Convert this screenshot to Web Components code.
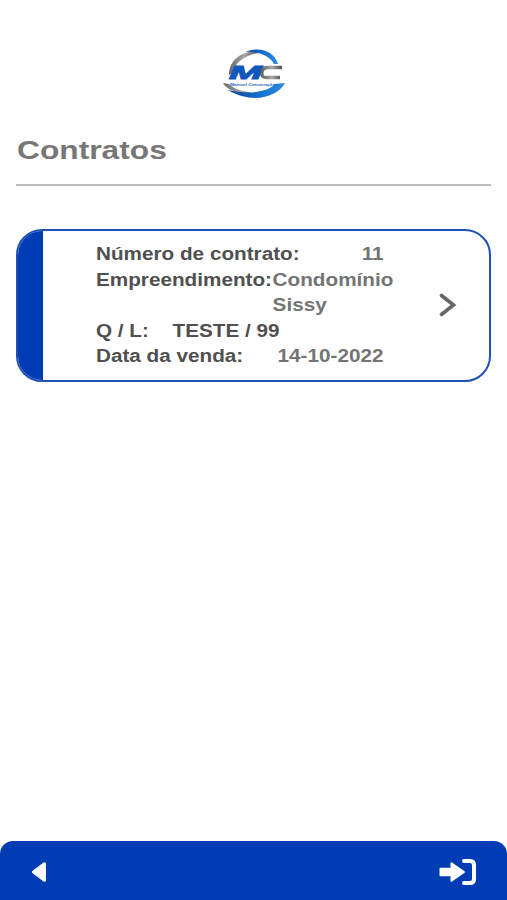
<!DOCTYPE html>
<html lang="pt-BR">
<head>
<meta charset="utf-8">
<title>Contratos</title>
<style>
    html, body { margin: 0; height: 100%; }
    body { background: #fff; font-family: "Liberation Sans", Arial, sans-serif; }
</style>
</head>
<body>
<app-screen>
    <brand-logo slot="logo"></brand-logo>
    <page-title slot="title">Contratos</page-title>
    <contract-card numero="11" empreendimento="Condomínio Sissy" lote="TESTE / 99" data="14-10-2022"></contract-card>
    <bottom-bar slot="footer"></bottom-bar>
</app-screen>

<script>
class AppScreen extends HTMLElement {
    constructor() {
        super();
        this.attachShadow({ mode: 'open' });
        this.shadowRoot.innerHTML = `
            <style>
                :host { display: flex; flex-direction: column; height: 100vh; overflow: hidden; }
                header { display: flex; justify-content: center; padding-top: 46px; height: 54px; }
                main { flex: 1; padding: 43px 16px 0; }
            </style>
            <header><slot name="logo"></slot></header>
            <slot name="title"></slot>
            <main><slot></slot></main>
            <slot name="footer"></slot>
        `;
    }
}

class BrandLogo extends HTMLElement {
    constructor() {
        super();
        this.attachShadow({ mode: 'open' });
        this.shadowRoot.innerHTML = `
            <style>
                :host { display: block; width: 68px; height: 54px; }
                svg { display: block; }
                text { font-family: "Liberation Sans", Arial, sans-serif; font-weight: bold; }
            </style>
            <svg width="68" height="54" viewBox="0 0 68 54">
                <defs>
                    <linearGradient id="blue" x1="0" x2="1">
                        <stop offset="0" stop-color="#0b3f9c"/>
                        <stop offset=".55" stop-color="#1471cf"/>
                        <stop offset="1" stop-color="#2b8be0"/>
                    </linearGradient>
                    <linearGradient id="gray" x1="0" x2="1">
                        <stop offset="0" stop-color="#666"/>
                        <stop offset=".5" stop-color="#a8a8a8"/>
                        <stop offset="1" stop-color="#4c4c4c"/>
                    </linearGradient>
                </defs>
                <path fill="url(#gray)" d="M9 29 C9 15 20 6 35 5 L40 7 C27 8 15 16 12 27Z"/>
                <path fill="url(#blue)" d="M25 6 C40 0 54 5 58 18 L54 18 C50 10 39 5 25 6Z"/>
                <path fill="url(#gray)" d="M3 37 C8 46 23 49 40 48 C25 46 13 43 9 38Z"/>
                <path fill="url(#blue)" d="M8 44 C28 49 48 46 55 38 L65 37 C57 52 31 58 8 44Z"/>
                <text x="9" y="32.5" font-size="19" font-style="italic" fill="#1257bd" stroke="#1257bd" stroke-width="1" textLength="33" lengthAdjust="spacingAndGlyphs">M</text>
                <path fill="none" stroke="url(#gray)" stroke-width="3.4" d="M62 21.5 H48 Q43 21.5 42 26 Q41 31.5 46 31.5 H60"/>
                <text x="10" y="39.8" font-size="3.5" fill="#2368bb" textLength="48" lengthAdjust="spacingAndGlyphs">Manuel Construções</text>
            </svg>
        `;
    }
}

class PageTitle extends HTMLElement {
    constructor() {
        super();
        this.attachShadow({ mode: 'open' });
        this.shadowRoot.innerHTML = `
            <style>
                :host { display: block; margin: 0 16px; padding: 35px 0 18px; border-bottom: 2px solid #bcbcbc; }
                h1 { margin: 0 0 0 1px; font-size: 26px; line-height: 31px; color: #777; transform: scaleX(1.22); transform-origin: left; }
            </style>
            <h1><slot></slot></h1>
        `;
    }
}

class ContractCard extends HTMLElement {
    connectedCallback() {
        this.attachShadow({ mode: 'open' });
        this.shadowRoot.innerHTML = `
            <style>
                :host {
                    display: flex;
                    box-sizing: border-box;
                    height: 153px;
                    border: 2px solid #1f50b8;
                    border-radius: 26px;
                    overflow: hidden;
                    background: #fff;
                }
                .stripe { width: 25px; background: #003cb3; }
                /* Wide lettering */
                dl {
                    margin: 0 0 0 53px;
                    padding-top: 11px;
                    width: 260px;
                    font-size: 17.5px;
                    font-weight: bold;
                    line-height: 25.5px;
                    transform: scaleX(1.183);
                    transform-origin: left;
                }
                .row { display: flex; }
                dt { color: #505050; white-space: nowrap; }
                dd { margin: 0; color: #747474; }
                .numero dd { margin-left: 52.5px; }
                .nome dd { width: 104px; margin-left: .5px; }
                .lote dd { margin-left: 20px; color: #505050; }
                .data dd { margin-left: 29px; }
                svg { margin: 62px 0 0 83px; }
            </style>
            <div class="stripe"></div>
            <dl>
                <div class="row numero"><dt>Número de contrato:</dt><dd>${this.getAttribute('numero')}</dd></div>
                <div class="row nome"><dt>Empreendimento:</dt><dd>${this.getAttribute('empreendimento')}</dd></div>
                <div class="row lote"><dt>Q / L:</dt><dd>${this.getAttribute('lote')}</dd></div>
                <div class="row data"><dt>Data da venda:</dt><dd>${this.getAttribute('data')}</dd></div>
            </dl>
            <svg width="18" height="24" viewBox="0 0 18 24">
                <path fill="none" stroke="#666" stroke-width="3.6" stroke-linecap="round" stroke-linejoin="miter" d="M2.5 2.5 L14.5 12 L2.5 21.5"/>
            </svg>
        `;
    }
}

class BottomBar extends HTMLElement {
    constructor() {
        super();
        this.attachShadow({ mode: 'open' });
        this.shadowRoot.innerHTML = `
            <style>
                :host {
                    display: flex;
                    box-sizing: border-box;
                    justify-content: space-between;
                    align-items: center;
                    height: 59px;
                    padding: 3px 30px 0 31px;
                    background: #003cb3;
                    border-radius: 13px 13px 0 0;
                }
                svg { display: block; }
            </style>
            <svg width="16" height="22" viewBox="0 0 16 22">
                <path fill="#fff" stroke="#fff" stroke-width="3" stroke-linejoin="round" d="M2.5 11 L13.5 2.8 V19.2Z"/>
            </svg>
            <svg width="38" height="28" viewBox="0 0 38 28">
                <path fill="#fff" stroke="#fff" stroke-width="2" stroke-linejoin="round" d="M1.5 10.8 H12.5 V5.2 L25 14 L12.5 22.8 V17.2 H1.5Z"/>
                <path fill="none" stroke="#fff" stroke-width="4" stroke-linecap="round" d="M25 3 H31 Q35 3 35 7 V21 Q35 25 31 25 H25"/>
            </svg>
        `;
    }
}

customElements.define('app-screen', AppScreen);
customElements.define('brand-logo', BrandLogo);
customElements.define('page-title', PageTitle);
customElements.define('contract-card', ContractCard);
customElements.define('bottom-bar', BottomBar);
</script>
</body>
</html>
